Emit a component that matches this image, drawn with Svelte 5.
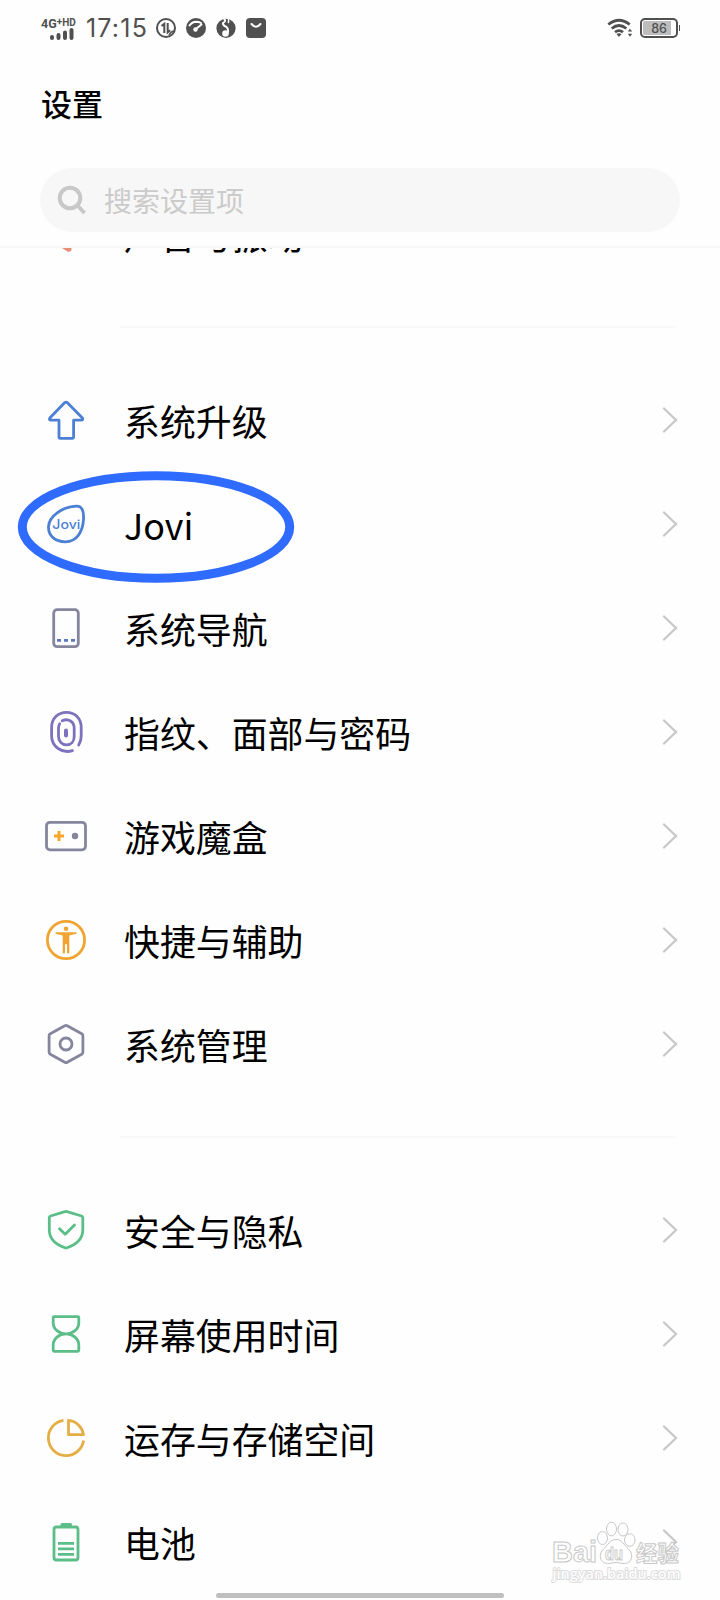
<script lang="ts">
  interface SettingItem {
    icon: string;
    label: string;
    circled?: boolean;
  }

  const groups: SettingItem[][] = [
    [{ icon: 'sound', label: '声音与振动' }],
    [
      { icon: 'upgrade', label: '系统升级' },
      { icon: 'jovi', label: 'Jovi', circled: true },
      { icon: 'navigation', label: '系统导航' },
      { icon: 'fingerprint', label: '指纹、面部与密码' },
      { icon: 'game', label: '游戏魔盒' },
      { icon: 'accessibility', label: '快捷与辅助' },
      { icon: 'system', label: '系统管理' }
    ],
    [
      { icon: 'security', label: '安全与隐私' },
      { icon: 'screentime', label: '屏幕使用时间' },
      { icon: 'storage', label: '运存与存储空间' },
      { icon: 'battery', label: '电池' }
    ]
  ];
</script>

{#snippet settingIcon(name: string)}
  <svg class="icon {name}" viewBox="0 0 48 48" aria-hidden="true">
    {#if name === 'sound'}
      <path d="M10 19h8l10-9v30l-10-9h-8z" />
      <path class="solid" d="M20 38h9.500l-2 3.500q-1 .6-2 0z" />
    {:else if name === 'upgrade'}
      <path d="M22.8 6.6q1.2-1 2.4 0L40.4 22q1.2 2.2-1.2 2.2H31.6V41q0 1.3-1.3 1.3H18.3q-1.3 0-1.3-1.3V24.2H9q-2.4 0-1.2-2.2z" />
    {:else if name === 'jovi'}
      <path d="M34.5 6.2c5.6-.2 7.600 5 7 13.500C40.700 32 34.500 41.700 23.500 41.800 13 41.900 6.400 35.600 6.500 27 6.700 16 21 6.500 34.500 6.200z" />
      <text x="10.300" y="28.600" textLength="28" lengthAdjust="spacingAndGlyphs">Jovi</text>
    {:else if name === 'navigation'}
      <rect x="11.700" y="5.700" width="24.600" height="37" rx="3.500" />
      <path class="dashes" d="M15 36.400h4M22 36.400h4M29 36.400h4" />
    {:else if name === 'fingerprint'}
      <path d="M30.500 42.600C20 46 9.600 38.500 9.600 28V19.500C9.600 10.500 16 4.400 24.500 4.400S39.200 10.500 39.200 19.500V28C39.200 31.500 38.300 34.600 36.700 37" />
      <path d="M20.200 12.800C26.500 9.800 32.200 14 32.200 20V28.500C32.200 33.500 29 36.900 24.500 36.900S16.500 33.500 16.500 28.500V20.500Q16.500 17.800 17.600 15.800" />
      <path class="core" d="M24 22.500v5" />
    {:else if name === 'game'}
      <rect x="4.500" y="10.300" width="39" height="27.500" rx="3.500" />
      <path class="plus" d="M12 24h10M17 19v10" />
      <circle class="dot" cx="33" cy="24" r="3.200" />
    {:else if name === 'accessibility'}
      <circle cx="24" cy="24" r="18.600" />
      <circle class="solid" cx="24" cy="12.700" r="2.300" />
      <path class="solid" d="M13.500 16.200h21v1.500L27.300 19.500v17.800h-2.300v-9h-2v9h-2.300V19.500L13.500 17.700z" />
    {:else if name === 'system'}
      <path d="M22.8 5.800q1.2-.7 2.4 0L39.700 13.700q1.2.7 1.2 2V32.300q0 1.3-1.2 2L25.200 42.300q-1.2.7-2.4 0L8.300 34.300q-1.2-.7-1.2-2V15.700q0-1.3 1.2-2z" />
      <circle cx="24" cy="24" r="6" />
    {:else if name === 'security'}
      <path d="M23 5.700q1-.5 2 0L39.600 10q1.2.5 1.2 1.700V24C40.8 33 34 38.600 25 41.800q-1 .4-2 0C14 38.600 7.300 33 7.300 24V11.700q0-1.200 1.200-1.700z" />
      <path d="M17.500 22.800l5.700 5.500 9.300-9.200" />
    {:else if name === 'screentime'}
      <path d="M12.200 6.600H35.800q1 0 1 1V13C36.800 19 31 23.800 24 23.800S11.200 19 11.200 13V7.600q0-1 1-1zM12.200 41.300H35.800q1 0 1-1V35C36.800 29 31 23.800 24 23.800S11.200 29 11.200 35V40.300q0 1 1 1z" />
    {:else if name === 'storage'}
      <path d="M21.500 6.400A17.700 17.700 0 1 0 41.600 26.500" />
      <path d="M26.500 6.400V20.700H41.500C40.300 13.300 34.300 7.200 26.500 6.400z" />
    {:else if name === 'battery'}
      <rect x="12" y="9" width="24" height="33" rx="2.500" />
      <path class="solid" d="M20 5h8.500q1.500 0 1.500 1.500V9H18.500V6.500Q18.500 5 20 5z" />
      <path class="levels" d="M16 25.300h16M16 30.800h16M16 36.400h16" />
    {/if}
  </svg>
{/snippet}

<div class="screen">
  <header>
    <div class="status-bar">
      <div class="network">
        <span>4G<sup>+</sup><small>HD</small></span>
        <svg width="24" height="12" viewBox="0 0 24 12" aria-hidden="true">
          <path d="M2 9v1M8.500 7V10M15 4.500V10M21.500 2V10" />
        </svg>
      </div>
      <time>17:15</time>
      <div class="status-icons">
        <svg width="20" height="20" viewBox="0 0 20 20" aria-hidden="true">
          <circle class="ring" cx="10" cy="10" r="9" />
          <path class="ring" d="M5.500 8L8.300 5.800V15M11.700 5V14.300L14.200 12.300" />
          <path class="ring thin" d="M13 17.500Q14.500 13.500 18 13" />
        </svg>
        <svg width="20" height="20" viewBox="0 0 20 20" aria-hidden="true">
          <circle cx="10" cy="10" r="10" />
          <path class="cut" d="M3.500 7.500Q6 3.800 10 3.700Q13 3.700 15 5M10 11L15.500 6.500" />
          <circle class="hole" cx="9.500" cy="11.500" r="2.200" />
        </svg>
        <svg width="20" height="20" viewBox="0 0 20 20" aria-hidden="true">
          <circle cx="10" cy="10.300" r="9.600" />
          <path class="cut" d="M8 .5Q10.500 3 7 5Q6.500 7.500 10.500 9Q13 11.500 11.500 15" />
          <path class="cut thin" d="M12.500 0v4.500" />
          <circle class="hole" cx="9.500" cy="15.500" r="3.300" />
        </svg>
        <svg width="20" height="20" viewBox="0 0 20 20" aria-hidden="true">
          <rect width="20" height="20" rx="4" />
          <path class="cut" d="M5.500 6Q10 11.500 14.500 6" />
        </svg>
      </div>
      <div class="status-right">
        <svg class="wifi" width="26" height="20" viewBox="0 0 26 20" aria-hidden="true">
          <path class="wave" d="M1.300 6.500Q12 -2 22.700 6.500M4.700 10.500Q12 4.500 19.300 10.500M8 14.200Q12 11 16 14.200" />
          <path d="M9.500 16L12 19l2.500-3Q12 14.500 9.500 16zM20.800 13.500L23 10.800l2.200 2.700zM20.800 15.800h4.400L23 18.700z" />
        </svg>
        <div class="charge"><span>86</span></div>
      </div>
    </div>
    <h1>设置</h1>
    <div class="search">
      <svg width="30" height="30" viewBox="0 0 30 30" aria-hidden="true">
        <circle cx="13" cy="13" r="10.300" />
        <path d="M20.500 20.500l7 7.500" />
      </svg>
      <span>搜索设置项</span>
    </div>
  </header>

  <main>
    {#each groups as group}
      <ul>
        {#each group as item}
          <li>
            {@render settingIcon(item.icon)}
            <span class="label">{item.label}</span>
            <svg class="chevron" width="16" height="28" viewBox="0 0 16 28" aria-hidden="true">
              <path d="M2 2.500L14 14 2 25.500" />
            </svg>
            {#if item.circled}
              <svg class="marker" width="280" height="116" viewBox="0 0 280 116" aria-hidden="true">
                <ellipse cx="140" cy="58" rx="133.700" ry="51.300" />
              </svg>
            {/if}
          </li>
        {/each}
      </ul>
    {/each}
  </main>

  <svg class="watermark" width="140" height="72" viewBox="0 0 140 72" aria-hidden="true">
    <text class="brand" x="1" y="44" textLength="45" lengthAdjust="spacingAndGlyphs">Bai</text>
    <ellipse cx="51.500" cy="20" rx="5" ry="6.500" />
    <ellipse cx="60.500" cy="11" rx="5" ry="6.800" />
    <ellipse cx="72" cy="11.500" rx="5" ry="6.500" />
    <ellipse cx="78.800" cy="22" rx="5.300" ry="6.300" />
    <path d="M65 21.500C71 21.500 73 27 77.500 31C82.500 35.500 82 45 73.500 45.500C70 45.700 68 44.500 65 44.500S60 45.700 56.500 45.500C48 45 47.500 35.500 52.500 31C57 27 59 21.500 65 21.500z" />
    <text class="du" x="54" y="41.500" textLength="18" lengthAdjust="spacingAndGlyphs">du</text>
    <text class="cn" x="85" y="42.500" textLength="43" lengthAdjust="spacingAndGlyphs">经验</text>
    <text class="url" x="1.500" y="60.500" textLength="128" lengthAdjust="spacingAndGlyphs">jingyan.baidu.com</text>
  </svg>
  <div class="home-indicator"></div>
</div>

<style>
  :global(body) {
    background: #fefefe;
  }

  .screen {
    position: relative;
    width: 720px;
    height: 1600px;
    display: flex;
    flex-direction: column;
    overflow: hidden;
    background: #fefefe;
    color: #000;
    font-family: 'Noto Sans CJK SC', sans-serif;
  }

  header {
    flex: none;
    box-sizing: border-box;
    height: 248px;
    border-bottom: 2px solid #f7f7f7;
  }

  .status-bar {
    display: flex;
    align-items: center;
    height: 56px;
    padding: 0 40px 0 41px;
    color: #505050;
    font-family: Inter, sans-serif;
  }

  .status-bar svg {
    flex: none;
    fill: #505050;
  }

  .network {
    width: 42px;
    height: 23px;
    font-family: Roboto, sans-serif;
    font-size: 12.500px;
    font-weight: 700;
    line-height: 11px;
    white-space: nowrap;
  }

  .network span {
    display: block;
    height: 11px;
  }

  .network sup {
    font-size: 10px;
    line-height: 0;
    vertical-align: 3px;
  }

  .network small {
    font-size: 10px;
    vertical-align: 2px;
  }

  .network svg {
    display: block;
    margin-left: 9px;
    stroke: #505050;
    stroke-width: 4;
    stroke-linecap: round;
  }

  time {
    width: 70px;
    padding-left: 3px;
    font-size: 25px;
    line-height: 30px;
    letter-spacing: 1.200px;
    white-space: nowrap;
  }

  .status-icons {
    display: flex;
    gap: 10px;
  }

  .status-bar .ring,
  .status-bar .cut {
    fill: none;
    stroke: #505050;
    stroke-width: 2;
  }

  .status-bar .cut {
    stroke: #fff;
    stroke-linecap: round;
  }

  .status-bar .thin {
    stroke-width: 1.500;
  }

  .status-bar .hole {
    fill: #fff;
  }

  .status-right {
    display: flex;
    align-items: center;
    gap: 7px;
    margin-left: auto;
  }

  .wave {
    fill: none;
    stroke: #505050;
    stroke-width: 2.800;
  }

  .charge {
    position: relative;
    box-sizing: border-box;
    width: 38px;
    height: 20px;
    margin-right: 2px;
    border: 2px solid #505050;
    border-radius: 5px;
    padding: 1px;
    background: linear-gradient(to right, #bdbdbd 28px, #fff 28px) content-box;
    font-size: 12.500px;
    font-weight: 500;
    line-height: 15px;
    text-align: center;
  }

  .charge::after {
    content: '';
    position: absolute;
    top: 5px;
    right: -4px;
    width: 1px;
    height: 6px;
    background: #505050;
  }

  h1 {
    height: 44px;
    margin: 25px 0 43px 41px;
    font-size: 31px;
    font-weight: 500;
    line-height: 44px;
  }

  .search {
    display: flex;
    align-items: center;
    gap: 17px;
    height: 64px;
    margin: 0 40px;
    padding-left: 17px;
    box-sizing: border-box;
    border-radius: 32px;
    background: #f7f7f7;
    color: #cbcbcb;
    font-size: 28px;
    font-weight: 400;
    line-height: 62px;
  }

  .search svg {
    fill: none;
    stroke: #c8c8c8;
    stroke-width: 4;
  }

  main {
    flex: 1;
    min-height: 0;
    overflow: hidden;
  }

  ul {
    margin: 0;
    padding: 0;
    list-style: none;
  }

  /* the list is scrolled so that its first row sits mostly under the header */
  ul:first-child {
    margin-top: -66px;
  }

  ul + ul {
    padding-top: 82px;
    background: linear-gradient(#f9f9f9, #f9f9f9) 120px 40px / 556px 2px no-repeat;
  }

  li {
    position: relative;
    display: flex;
    align-items: center;
    height: 104px;
    padding: 0 42px;
  }

  .label {
    flex: 1;
    margin-left: 34px;
    padding-bottom: 1px;
    font-size: 35.900px;
    line-height: 50px;
  }

  .icon {
    width: 48px;
    height: 48px;
    fill: none;
    stroke: currentColor;
    stroke-width: 2.800;
    stroke-linecap: round;
    stroke-linejoin: round;
  }

  .icon .solid {
    fill: currentColor;
    stroke: none;
  }

  .sound {
    color: #e88e78;
  }

  .upgrade,
  .jovi {
    color: #4b80d4;
  }

  .jovi text {
    fill: currentColor;
    stroke: none;
    font: 500 12.500px Inter, sans-serif;
  }

  .navigation,
  .game,
  .system {
    color: #85859d;
  }

  .icon .dashes {
    stroke: #5b78bd;
    stroke-linecap: butt;
  }

  .fingerprint {
    color: #7d72bd;
  }

  .icon .core {
    stroke-width: 4;
  }

  .icon .plus {
    stroke: #f5a62b;
    stroke-width: 3;
    stroke-linecap: butt;
  }

  .icon .dot {
    fill: #85859d;
    stroke: none;
  }

  .accessibility {
    color: #f0a532;
  }

  .security,
  .screentime,
  .battery {
    color: #5bbd87;
  }

  .icon .levels {
    stroke-linecap: butt;
  }

  .storage {
    color: #e5ae45;
    stroke-linecap: butt;
  }

  .chevron {
    fill: none;
    stroke: #c9c9c9;
    stroke-width: 2.400;
    stroke-linecap: round;
  }

  .marker {
    position: absolute;
    left: 16px;
    top: -3px;
    fill: none;
    stroke: #2f6bff;
    stroke-width: 9;
  }

  .watermark {
    position: absolute;
    left: 551px;
    top: 1518px;
    fill: #fefefe;
    stroke: #c8c8c8;
    stroke-width: 1;
  }

  .watermark text {
    font-family: 'Liberation Sans', 'Noto Sans CJK SC', sans-serif;
    font-weight: 700;
  }

  .brand {
    font-size: 29px;
  }

  .du {
    font-size: 19px;
  }

  .cn {
    font-size: 22px;
  }

  .watermark .url {
    font-family: 'Open Sans', sans-serif;
    font-size: 15px;
    font-weight: 600;
    stroke: #dcdcdc;
    paint-order: stroke;
    stroke-width: 2;
  }

  .home-indicator {
    position: absolute;
    left: 216px;
    bottom: 2px;
    width: 288px;
    height: 5px;
    border-radius: 3px;
    background: #bfbfbf;
  }
</style>
